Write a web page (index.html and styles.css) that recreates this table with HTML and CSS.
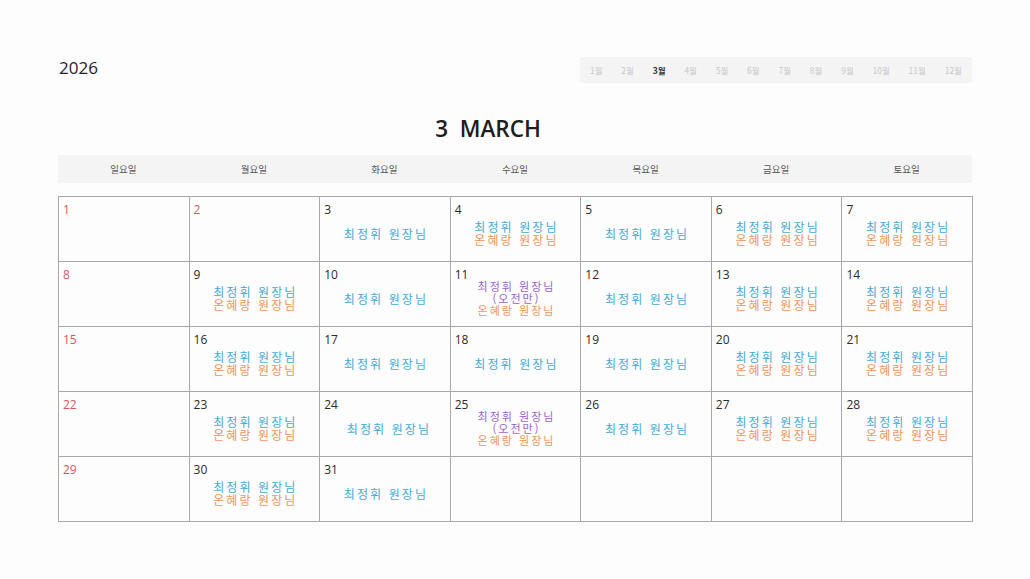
FILE: index.html
```html
<!DOCTYPE html>
<html lang="ko">
<head>
<meta charset="utf-8">
<link rel="stylesheet" href="styles.css">
</head>
<body>
<div class="page">
  <div class="top">
    <div class="year">2026</div>
    <nav class="months">
      <span>1월</span><span>2월</span><span class="active">3월</span><span>4월</span><span>5월</span><span>6월</span><span>7월</span><span>8월</span><span>9월</span><span>10월</span><span>11월</span><span>12월</span>
    </nav>
  </div>
  <h1 class="title">3&nbsp;&nbsp;MARCH</h1>
  <div class="weekdays">
    <div>일요일</div><div>월요일</div><div>화요일</div><div>수요일</div><div>목요일</div><div>금요일</div><div>토요일</div>
  </div>
  <div class="grid">
    <div class="cell"><div class="num red">1</div><div class="ev"></div></div>
    <div class="cell"><div class="num red">2</div><div class="ev"></div></div>
    <div class="cell"><div class="num">3</div><div class="ev"><span class="b">최정휘 원장님</span></div></div>
    <div class="cell"><div class="num">4</div><div class="ev"><span class="b">최정휘 원장님</span><span class="o">온혜랑 원장님</span></div></div>
    <div class="cell"><div class="num">5</div><div class="ev"><span class="b">최정휘 원장님</span></div></div>
    <div class="cell"><div class="num">6</div><div class="ev"><span class="b">최정휘 원장님</span><span class="o">온혜랑 원장님</span></div></div>
    <div class="cell"><div class="num">7</div><div class="ev"><span class="b">최정휘 원장님</span><span class="o">온혜랑 원장님</span></div></div>

    <div class="cell"><div class="num red">8</div><div class="ev"></div></div>
    <div class="cell"><div class="num">9</div><div class="ev"><span class="b">최정휘 원장님</span><span class="o">온혜랑 원장님</span></div></div>
    <div class="cell"><div class="num">10</div><div class="ev"><span class="b">최정휘 원장님</span></div></div>
    <div class="cell"><div class="num">11</div><div class="ev tight"><span class="p">최정휘 원장님</span><span class="p">(오전만)</span><span class="o">온혜랑 원장님</span></div></div>
    <div class="cell"><div class="num">12</div><div class="ev"><span class="b">최정휘 원장님</span></div></div>
    <div class="cell"><div class="num">13</div><div class="ev"><span class="b">최정휘 원장님</span><span class="o">온혜랑 원장님</span></div></div>
    <div class="cell"><div class="num">14</div><div class="ev"><span class="b">최정휘 원장님</span><span class="o">온혜랑 원장님</span></div></div>

    <div class="cell"><div class="num red">15</div><div class="ev"></div></div>
    <div class="cell"><div class="num">16</div><div class="ev"><span class="b">최정휘 원장님</span><span class="o">온혜랑 원장님</span></div></div>
    <div class="cell"><div class="num">17</div><div class="ev"><span class="b">최정휘 원장님</span></div></div>
    <div class="cell"><div class="num">18</div><div class="ev"><span class="b">최정휘 원장님</span></div></div>
    <div class="cell"><div class="num">19</div><div class="ev"><span class="b">최정휘 원장님</span></div></div>
    <div class="cell"><div class="num">20</div><div class="ev"><span class="b">최정휘 원장님</span><span class="o">온혜랑 원장님</span></div></div>
    <div class="cell"><div class="num">21</div><div class="ev"><span class="b">최정휘 원장님</span><span class="o">온혜랑 원장님</span></div></div>

    <div class="cell"><div class="num red">22</div><div class="ev"></div></div>
    <div class="cell"><div class="num">23</div><div class="ev"><span class="b">최정휘 원장님</span><span class="o">온혜랑 원장님</span></div></div>
    <div class="cell"><div class="num">24</div><div class="ev shift"><span class="b">최정휘 원장님</span></div></div>
    <div class="cell"><div class="num">25</div><div class="ev tight"><span class="p">최정휘 원장님</span><span class="p">(오전만)</span><span class="o">온혜랑 원장님</span></div></div>
    <div class="cell"><div class="num">26</div><div class="ev"><span class="b">최정휘 원장님</span></div></div>
    <div class="cell"><div class="num">27</div><div class="ev"><span class="b">최정휘 원장님</span><span class="o">온혜랑 원장님</span></div></div>
    <div class="cell"><div class="num">28</div><div class="ev"><span class="b">최정휘 원장님</span><span class="o">온혜랑 원장님</span></div></div>

    <div class="cell"><div class="num red">29</div><div class="ev"></div></div>
    <div class="cell"><div class="num">30</div><div class="ev"><span class="b">최정휘 원장님</span><span class="o">온혜랑 원장님</span></div></div>
    <div class="cell"><div class="num">31</div><div class="ev"><span class="b">최정휘 원장님</span></div></div>
    <div class="cell"><div class="num"></div><div class="ev"></div></div>
    <div class="cell"><div class="num"></div><div class="ev"></div></div>
    <div class="cell"><div class="num"></div><div class="ev"></div></div>
    <div class="cell"><div class="num"></div><div class="ev"></div></div>
  </div>
</div>
</body>
</html>
```

FILE: styles.css
```css
* { box-sizing: border-box; }
html, body { margin: 0; padding: 0; }
body {
  background: #fdfdfd;
  font-family: "Open Sans", "Noto Sans CJK KR", sans-serif;
  color: #222;
}
.page {
  width: 914px;
  margin-left: 58px;
  padding-top: 57px;
}
.top {
  display: flex;
  justify-content: space-between;
  align-items: center;
  height: 26px;
}
.year {
  font-size: 17px;
  line-height: 24px;
  color: #1e1e1e;
  padding-left: 1px;
  margin-bottom: 4px;
}
.months {
  width: 392px;
  height: 26px;
  background: #f4f4f4;
  display: flex;
  justify-content: space-between;
  align-items: center;
  padding: 0 10px 0 10px;
  font-family: "Noto Sans CJK KR", sans-serif;
  font-size: 8.5px;
  color: #c8c8c8;
}
.months .active {
  color: #333;
  font-weight: 700;
}
.title {
  margin: 0;
  padding-right: 54px;
  text-align: center;
  font-size: 22.5px;
  font-weight: 600;
  line-height: 30px;
  margin-top: 31px;
  color: #1e1e1e;
  white-space: pre;
}
.weekdays {
  margin-top: 11px;
  height: 28px;
  background: #f4f4f4;
  display: grid;
  grid-template-columns: repeat(7, 1fr);
  align-items: center;
  text-align: center;
  font-family: "Noto Sans CJK KR", sans-serif;
  font-size: 9.5px;
  color: #555;
}
.grid {
  margin-top: 13px;
  width: 915px;
  display: grid;
  grid-template-columns: repeat(7, 1fr);
  grid-auto-rows: 65px;
  border-top: 1px solid #a8a8a8;
  border-left: 1px solid #a8a8a8;
}
.cell {
  border-right: 1px solid #a8a8a8;
  border-bottom: 1px solid #a8a8a8;
  display: flex;
  flex-direction: column;
  padding-bottom: 13px;
  min-height: 0;
}
.num {
  padding: 5px 0 0 4px;
  height: 21px;
  font-size: 12px;
  line-height: 16px;
  color: #2a2a2a;
  flex: none;
}
.num.red { color: #d0585f; }
.ev {
  flex: 1;
  min-height: 0;
  display: flex;
  flex-direction: column;
  justify-content: center;
  align-items: center;
  font-family: "Noto Sans CJK KR", sans-serif;
  font-size: 12px;
  line-height: 13px;
  letter-spacing: 2.1px;
  padding-left: 2px;
  white-space: nowrap;
}
.ev.tight { line-height: 12px; font-size: 11px; letter-spacing: 2px; }
.ev.shift { padding-left: 8px; }
.b { color: #45a9d6; }
.o { color: #ee9459; }
.p { color: #9a62c8; }
```
